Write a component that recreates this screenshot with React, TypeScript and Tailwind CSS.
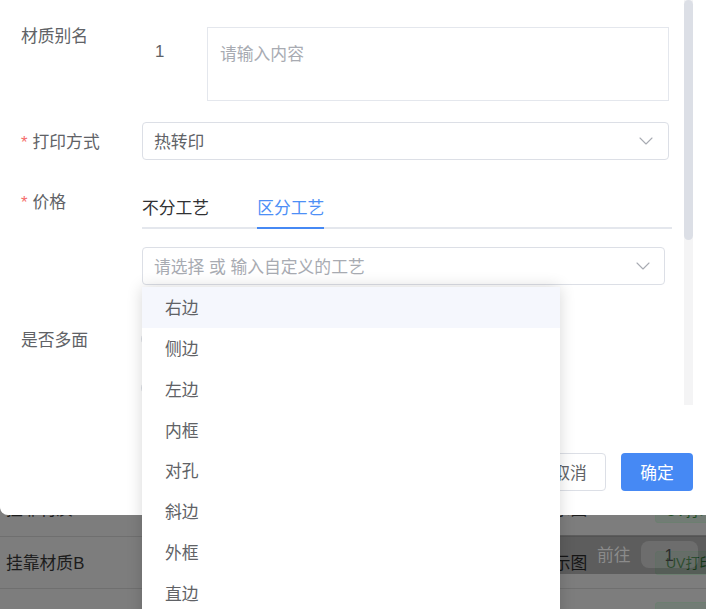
import React from "react";

const Chevron = ({ className = "" }: { className?: string }) => (
  <svg width="14" height="8" viewBox="0 0 14 8" className={className} fill="none">
    <path d="M1 1 L7 7 L13 1" stroke="#a8abb2" strokeWidth="1.1" strokeLinecap="round" strokeLinejoin="round" />
  </svg>
);

const items = ["右边", "侧边", "左边", "内框", "对孔", "斜边", "外框", "直边"];

function Tag({ text }: { text: string }) {
  return (
    <div className="shrink-0 w-[70px] h-[24px] px-[10px] border border-[#6c7f70] bg-[#727c75] rounded-[3px] text-[14px] leading-[22px] text-[#1d4d22] whitespace-nowrap">
      {text}
    </div>
  );
}

export default function App() {
  return (
    <div
      className="relative w-[706px] h-[609px] overflow-hidden bg-[#7d7d7d] text-[16.8px]"
      style={{ fontFamily: '"Liberation Sans", "Noto Sans CJK SC", sans-serif' }}
    >
      {/* underlying page (masked) */}
      <div className="pt-[485px]">
        <div className="h-[52px] border-b border-[#6f6f6f] flex items-center">
          <div className="shrink-0 pl-[6px] w-[537px] text-[#1c1c1c] -mt-[1px]">挂靠材质A</div>
          <div className="shrink-0 w-[118px] text-[#1c1c1c] -mt-[1px]">展示图</div>
          <Tag text="UV打印" />
        </div>
        <div className="h-[52px] border-b border-[#6f6f6f] flex items-center">
          <div className="shrink-0 pl-[6px] w-[537px] text-[#1c1c1c] pt-[3px]">挂靠材质B</div>
          <div className="shrink-0 w-[118px] text-[#1c1c1c] pt-[3px]">展示图</div>
          <Tag text="UV打印" />
        </div>
        <div className="h-[52px] flex pt-[13px]">
          <div className="shrink-0 w-[655px]" />
          <div className="shrink-0 w-[70px] h-[24px] border border-[#6c7f70] bg-[#727c75] rounded-[3px]" />
        </div>
      </div>
      <div className="absolute left-[400px] top-[535px] w-[306px] h-[39px] bg-black/25 flex items-center">
        <span className="ml-[197px] pt-[2px] text-[#8b8b8b]">前往</span>
        <div className="ml-[10px] w-[57px] h-[27px] rounded-[8px] bg-white/10 flex items-center justify-center text-[#2c2c2c] pt-[2px]">
          1
        </div>
      </div>

      {/* dialog */}
      <div className="absolute left-0 top-0 w-[706px] h-[515px] bg-white rounded-bl-[8px] flex flex-col">
        <div className="relative h-[405px] overflow-hidden">
          <div className="pt-[27px] pl-[21px] text-[#606266]">
            {/* row 1 */}
            <div className="flex items-start">
              <div className="w-[121px] pt-[2px] leading-[16px]">材质别名</div>
              <div className="w-[65px] pl-[13px] pt-[17px] leading-[16px]">1</div>
              <div className="w-[462px] h-[74px] border border-[#e4e7ed] px-[12px] pt-[19px] leading-[16px] text-[#a8abb2]">
                请输入内容
              </div>
            </div>
            {/* row 2 */}
            <div className="mt-[21px] flex items-center h-[38px]">
              <div className="w-[121px] pt-[3px] leading-[16px]">
                <span className="text-[#f56c6c] mr-[5px]">*</span>打印方式
              </div>
              <div className="w-[527px] h-[38px] border border-[#dcdfe6] rounded-[4px] pl-[11px] pr-[15px] flex items-center justify-between">
                <span className="pt-[3px]">热转印</span>
                <Chevron />
              </div>
            </div>
            {/* row 3 */}
            <div className="mt-[22px] flex items-start">
              <div className="w-[121px] pt-[13px] leading-[16px]">
                <span className="text-[#f56c6c] mr-[5px]">*</span>价格
              </div>
              <div className="w-[530px]">
                <div className="flex border-b-2 border-[#e4e7ed]">
                  <div className="pr-[24px] -mb-[2px]">
                    <div className="pt-[19px] pb-[10px] leading-[16px] text-[#303133] border-b-2 border-transparent">
                      不分工艺
                    </div>
                  </div>
                  <div className="pl-[24px] -mb-[2px]">
                    <div className="pt-[19px] pb-[10px] leading-[16px] text-[#4d8ff6] border-b-2 border-[#4689f4]">
                      区分工艺
                    </div>
                  </div>
                </div>
                <div className="mt-[18px] w-[523px] h-[38px] border border-[#dcdfe6] rounded-[4px] pl-[11px] pr-[14px] flex items-center justify-between">
                  <span className="pt-[3px] text-[#a8abb2]">请选择 或 输入自定义的工艺</span>
                  <Chevron />
                </div>
              </div>
            </div>
            {/* row 4 */}
            <div className="mt-[35px] h-[38px] flex items-center">
              <div className="w-[120px] pt-[3px] leading-[16px]">是否多面</div>
              <div className="w-[16px] h-[16px] rounded-full border border-[#dcdfe6]" />
            </div>
            {/* row 5 */}
            <div className="mt-[11px] h-[38px] flex items-center">
              <div className="w-[120px]" />
              <div className="w-[16px] h-[16px] rounded-full border border-[#dcdfe6]" />
            </div>
          </div>
          {/* scrollbar */}
          <div className="absolute right-[13px] top-0 w-[9px] h-[405px] bg-[#f4f4f5]">
            <div className="w-[9px] h-[240px] rounded-full bg-[#dcdfe6]" />
          </div>
        </div>
        {/* footer */}
        <div className="pt-[48px] pr-[13px] flex justify-end gap-[15px]">
          <div className="w-[72px] h-[38px] rounded-[4px] border border-[#dcdfe6] flex items-center justify-center text-[#606266] pt-[3px]">
            取消
          </div>
          <div className="w-[72px] h-[38px] rounded-[4px] bg-[#4689f4] flex items-center justify-center text-white pt-[3px]">
            确定
          </div>
        </div>
      </div>

      {/* dropdown */}
      <div className="absolute left-[142px] top-[287px] w-[418px] h-[340px] bg-white rounded-[4px] shadow-[0_0_16px_rgba(0,0,0,0.16)]">
        {items.map((it, i) => (
          <div
            key={it}
            className={
              "h-[40.8px] pl-[23px] pt-[3px] flex items-center text-[#606266] " + (i === 0 ? "bg-[#f5f7fd]" : "")
            }
          >
            {it}
          </div>
        ))}
      </div>
    </div>
  );
}
